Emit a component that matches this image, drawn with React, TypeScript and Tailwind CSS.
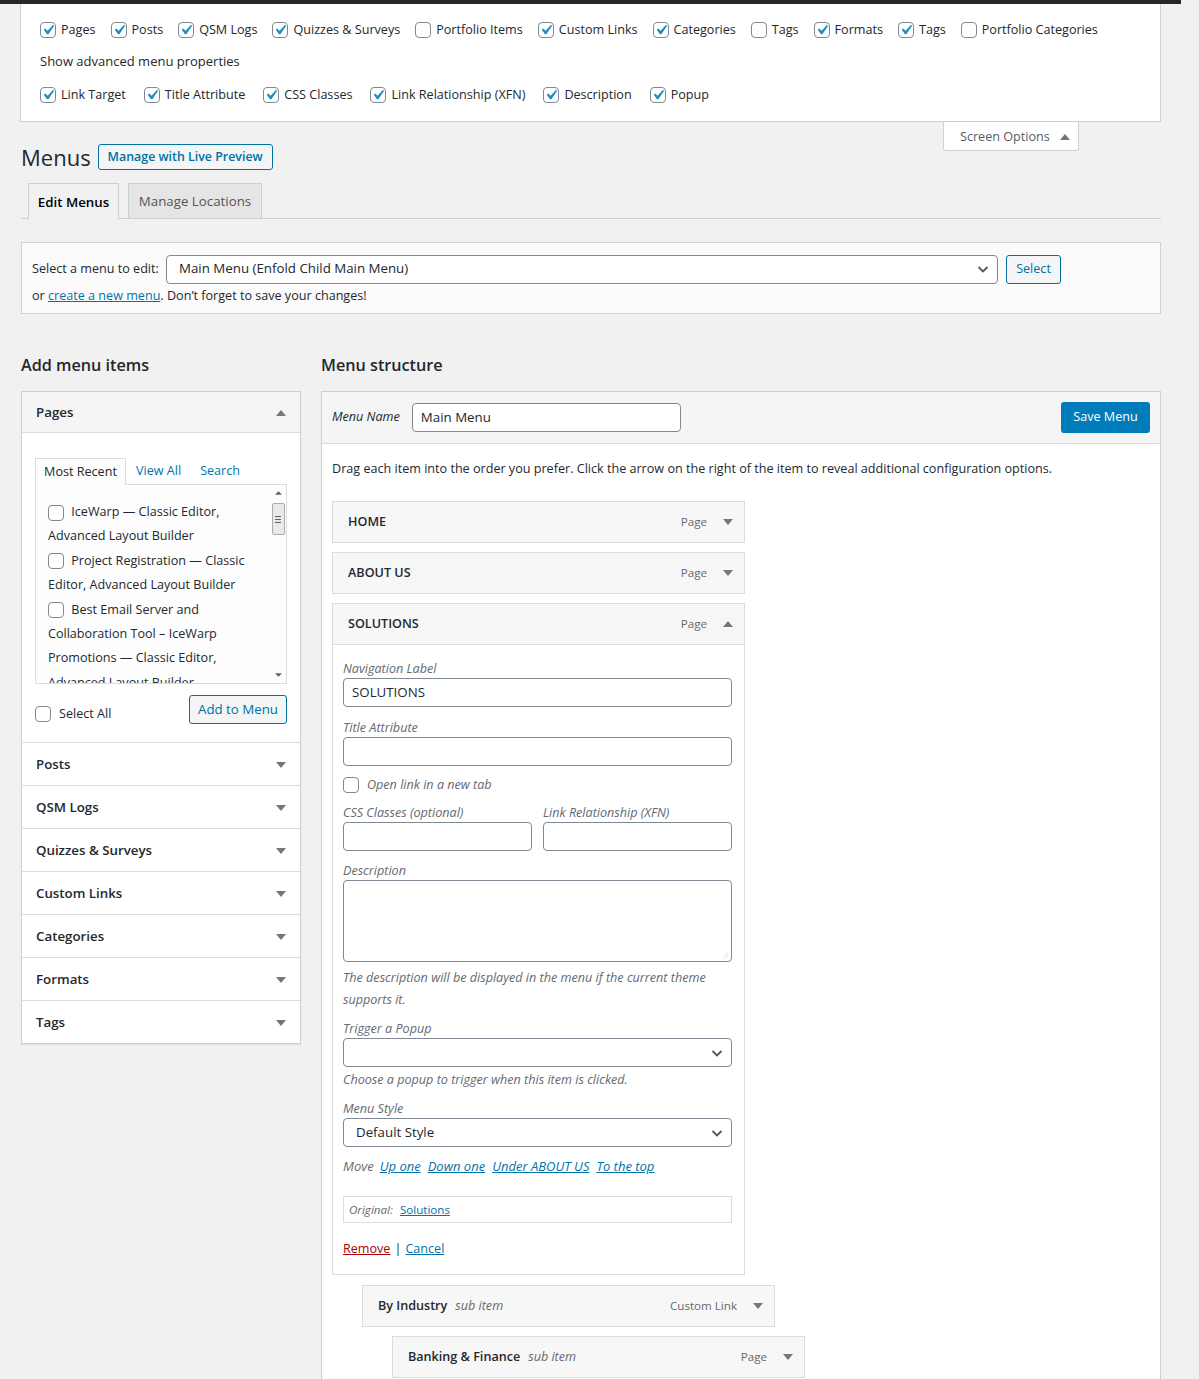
import React from "react";

const font = { fontFamily: '"Open Sans", "Noto Sans", Arial, sans-serif' };

function Check({ on = false }: { on?: boolean }) {
  return (
    <span className="relative inline-block h-4 w-4 shrink-0 rounded-[4px] border border-[#7e8993] bg-white align-middle">
      {on && (
        <svg viewBox="0 0 20 20" className="absolute -left-[3px] -top-[3px] h-5 w-5">
          <path d="M14.83 4.89l1.34.94-5.81 8.38H9.02L5.78 9.67l1.34-1.25 2.57 2.4z" fill="#1e8cbe" />
        </svg>
      )}
    </span>
  );
}

function Arrow({ up = false }: { up?: boolean }) {
  return (
    <svg viewBox="0 0 10 6" className="h-[6px] w-[10px]">
      {up ? <path d="M0 6 5 0 10 6z" fill="#72777c" /> : <path d="M0 0 5 6 10 0z" fill="#72777c" />}
    </svg>
  );
}

function Chevron() {
  return (
    <svg viewBox="0 0 16 16" className="h-4 w-4">
      <path d="M3.5 6 8 10.5 12.5 6" fill="none" stroke="#50575e" strokeWidth="1.8" />
    </svg>
  );
}

const typeRow1: [string, boolean][] = [
  ["Pages", true],
  ["Posts", true],
  ["QSM Logs", true],
  ["Quizzes & Surveys", true],
  ["Portfolio Items", false],
  ["Custom Links", true],
  ["Categories", true],
  ["Tags", false],
  ["Formats", true],
  ["Tags", true],
  ["Portfolio Categories", false],
];

const typeRow2 = ["Link Target", "Title Attribute", "CSS Classes", "Link Relationship (XFN)", "Description", "Popup"];

const sections = ["Posts", "QSM Logs", "Quizzes & Surveys", "Custom Links", "Categories", "Formats", "Tags"];

function ScreenOptions() {
  return (
    <div className="relative ml-[20px] w-[1141px]">
      <div className="h-[118px] border-x border-b border-[#ccd0d4] bg-white pl-[19px] pt-[16px] text-[12.6px] text-[#23282d]">
        <div className="flex h-5 items-center gap-x-[15px]">
          {typeRow1.map(([label, on], i) => (
            <label key={i} className="flex items-center gap-[5px]">
              <Check on={on} />
              <span>{label}</span>
            </label>
          ))}
        </div>
        <div className="mt-[12px] flex h-5 items-center text-[13px]">Show advanced menu properties</div>
        <div className="mt-[13px] flex h-5 items-center gap-x-[18px]">
          {typeRow2.map((label) => (
            <label key={label} className="flex items-center gap-[5px]">
              <Check on />
              <span>{label}</span>
            </label>
          ))}
        </div>
      </div>
      <div className="absolute right-[82px] top-full flex h-[29px] w-[136px] items-center gap-[10px] rounded-b-[3px] border-x border-b border-[#ccd0d4] bg-white pl-[16px] pt-[2px] text-[12.6px] text-[#555d66]">
        Screen Options
        <Arrow up />
      </div>
    </div>
  );
}

function Input({ value = "", className = "" }: { value?: string; className?: string }) {
  return (
    <div className={`flex h-[29px] items-center rounded-[4px] border border-[#7e8993] bg-white px-[8px] text-[13.3px] text-[#23282d] ${className}`}>
      {value}
    </div>
  );
}

function SelectBox({ value = "" }: { value?: string }) {
  return (
    <div className="flex h-[29px] items-center justify-between rounded-[4px] border border-[#7e8993] bg-white pl-[12px] pr-[6px] text-[13.3px] text-[#23282d]">
      <span>{value}</span>
      <Chevron />
    </div>
  );
}

function Label({ children }: { children: React.ReactNode }) {
  return <div className="flex h-[18px] items-center text-[12.6px] italic text-[#646970]">{children}</div>;
}

function ItemBar({ title, type, sub = false, up = false }: { title: string; type: string; sub?: boolean; up?: boolean }) {
  return (
    <div className="flex h-[42px] items-center justify-between border border-[#dcdcde] bg-[#f7f7f7] pl-[15px] pr-[11px]">
      <div className="flex items-center gap-[8px]">
        <span className="text-[12.6px] font-semibold text-[#23282d]">{title}</span>
        {sub && <span className="text-[12.6px] italic text-[#646970]">sub item</span>}
      </div>
      <div className="flex items-center gap-[16px]">
        <span className="text-[11.6px] text-[#646970]">{type}</span>
        <Arrow up={up} />
      </div>
    </div>
  );
}

function LeftColumn() {
  return (
    <div className="w-[280px] shrink-0">
      <h2 className="flex h-[24px] items-center text-[16.2px] font-semibold text-[#23282d]">Add menu items</h2>
      <div className="mt-[14px] border border-[#ccd0d4] bg-white shadow-[0_1px_1px_rgba(0,0,0,0.06)]">
        <div className="flex h-[41px] items-center justify-between border-b border-[#dcdcde] bg-[#f5f5f5] pl-[14px] pr-[14px] pt-[1px]">
          <span className="text-[13.3px] font-semibold text-[#23282d]">Pages</span>
          <Arrow up />
        </div>
        <div className="px-[13px] pb-[18px] pt-[25px]">
          <div className="flex h-[26px] items-end text-[12.6px]">
            <div className="-mb-px flex h-[27px] w-[91px] items-center justify-center border-x border-t border-[#dcdcde] bg-[#fdfdfd] text-[#23282d]">
              Most Recent
            </div>
            <span className="flex h-[26px] items-center pl-[10px] text-[#0073aa]">View All</span>
            <span className="flex h-[26px] items-center pl-[19px] text-[#0073aa]">Search</span>
          </div>
          <div className="flex h-[200px] overflow-hidden border border-[#dcdcde] bg-[#fdfdfd]">
            <div className="flex-1 pl-[12px] pr-[10px] pt-[15px] text-[12.6px] leading-[24.4px] text-[#23282d]">
              <p>
                <Check /> <span className="ml-[4px]">IceWarp — Classic Editor, Advanced Layout Builder</span>
              </p>
              <p>
                <Check /> <span className="ml-[4px]">Project Registration — Classic Editor, Advanced Layout Builder</span>
              </p>
              <p>
                <Check />{" "}
                <span className="ml-[4px]">Best Email Server and Collaboration Tool – IceWarp Promotions — Classic Editor, Advanced Layout Builder</span>
              </p>
            </div>
            <div className="flex w-[16px] flex-col items-center bg-[#fdfdfd]">
              <div className="flex h-[16px] w-full items-center justify-center">
                <svg viewBox="0 0 8 4" className="h-[4px] w-[7px]">
                  <path d="M0 4 4 0 8 4z" fill="#606060" />
                </svg>
              </div>
              <div className="mt-[2px] flex h-[32px] w-[13px] items-center justify-center rounded-[2px] border border-[#acacac] bg-[#e9e9e9]">
                <div className="flex flex-col gap-[2px]">
                  <div className="h-px w-[6px] bg-[#606060]" />
                  <div className="h-px w-[6px] bg-[#606060]" />
                  <div className="h-px w-[6px] bg-[#606060]" />
                </div>
              </div>
              <div className="flex-1" />
              <div className="flex h-[16px] w-full items-center justify-center">
                <svg viewBox="0 0 8 4" className="h-[4px] w-[7px]">
                  <path d="M0 0 4 4 8 0z" fill="#606060" />
                </svg>
              </div>
            </div>
          </div>
          <div className="mt-[11px] flex items-start justify-between">
            <label className="mt-[10px] flex items-center gap-[8px] text-[12.6px] text-[#23282d]">
              <Check />
              Select All
            </label>
            <div className="flex h-[29px] w-[98px] items-center justify-center rounded-[3px] border border-[#0071a1] bg-[#f3f5f6] text-[13.3px] text-[#0071a1]">
              Add to Menu
            </div>
          </div>
        </div>
        {sections.map((s) => (
          <div key={s} className="flex h-[43px] items-center justify-between border-t border-[#dcdcde] pl-[14px] pr-[14px] pt-[1px]">
            <span className="text-[13.3px] font-semibold text-[#23282d]">{s}</span>
            <Arrow />
          </div>
        ))}
      </div>
    </div>
  );
}

function RightColumn() {
  return (
    <div className="w-[840px] shrink-0">
      <h2 className="flex h-[24px] items-center text-[16.2px] font-semibold text-[#23282d]">Menu structure</h2>
      <div className="mt-[14px] border border-[#ccd0d4] bg-white">
        <div className="flex h-[52px] items-center justify-between border-b border-[#dcdcde] bg-[#f5f5f5] pl-[10px] pr-[10px]">
          <div className="flex items-center gap-[12px]">
            <span className="text-[12.6px] italic text-[#23282d]">Menu Name</span>
            <Input value="Main Menu" className="w-[269px]" />
          </div>
          <div className="flex h-[31px] w-[89px] items-center justify-center rounded-[3px] bg-[#007cba] text-[12.6px] text-white">
            Save Menu
          </div>
        </div>
        <div className="px-[10px] pb-[40px]">
          <p className="mt-[15px] h-[20px] text-[12.6px] leading-[20px] text-[#23282d]">
            Drag each item into the order you prefer. Click the arrow on the right of the item to reveal additional configuration options.
          </p>
          <div className="mt-[22px] w-[413px]">
            <ItemBar title="HOME" type="Page" />
            <div className="mt-[9px]">
              <ItemBar title="ABOUT US" type="Page" />
            </div>
            <div className="mt-[9px]">
              <ItemBar title="SOLUTIONS" type="Page" up />
              <div className="border-x border-b border-[#dcdcde] bg-white pb-[15px] pl-[10px] pr-[12px] pt-[15px]">
                <Label>Navigation Label</Label>
                <Input value="SOLUTIONS" />
                <div className="mt-[12px]">
                  <Label>Title Attribute</Label>
                  <Input />
                </div>
                <div className="mt-[10px] flex h-[18px] items-center gap-[8px] text-[12.6px] italic text-[#646970]">
                  <Check />
                  Open link in a new tab
                </div>
                <div className="mt-[10px] grid grid-cols-2 gap-[11px]">
                  <div>
                    <Label>CSS Classes (optional)</Label>
                    <Input />
                  </div>
                  <div>
                    <Label>Link Relationship (XFN)</Label>
                    <Input />
                  </div>
                </div>
                <div className="mt-[11px]">
                  <Label>Description</Label>
                  <div className="relative h-[82px] rounded-[4px] border border-[#7e8993] bg-white">
                    <svg viewBox="0 0 8 8" className="absolute bottom-[2px] right-[2px] h-[7px] w-[7px]">
                      <path d="M7 1 1 7M7 4 4 7" stroke="#b0b0b0" strokeWidth="1" strokeDasharray="1 1" />
                    </svg>
                  </div>
                </div>
                <p className="mt-[5px] text-[12.6px] italic leading-[22px] text-[#646970]">
                  The description will be displayed in the menu if the current theme supports it.
                </p>
                <div className="mt-[9px]">
                  <Label>Trigger a Popup</Label>
                  <SelectBox />
                </div>
                <p className="mt-[4px] text-[12.6px] italic leading-[18px] text-[#646970]">
                  Choose a popup to trigger when this item is clicked.
                </p>
                <div className="mt-[11px]">
                  <Label>Menu Style</Label>
                  <SelectBox value="Default Style" />
                </div>
                <div className="mt-[10px] flex h-[20px] items-center gap-[7px] text-[13px] italic text-[#646970]">
                  <span className="mr-[-1px]">Move</span>
                  <span className="text-[#0073aa] underline">Up one</span>
                  <span className="text-[#0073aa] underline">Down one</span>
                  <span className="text-[#0073aa] underline">Under ABOUT US</span>
                  <span className="text-[#0073aa] underline">To the top</span>
                </div>
                <div className="mt-[19px] flex h-[27px] items-center gap-[7px] border border-[#dcdcde] pl-[5px] text-[11.6px]">
                  <span className="italic text-[#646970]">Original:</span>
                  <span className="text-[#0073aa] underline">Solutions</span>
                </div>
                <div className="mt-[16px] flex h-[20px] items-center gap-[4px] text-[12.6px]">
                  <span className="text-[#a00] underline">Remove</span>
                  <span className="text-[#23282d]">|</span>
                  <span className="text-[#0073aa] underline">Cancel</span>
                </div>
              </div>
            </div>
          </div>
          <div className="ml-[30px] mt-[10px] w-[413px]">
            <ItemBar title="By Industry" type="Custom Link" sub />
          </div>
          <div className="ml-[60px] mt-[9px] w-[413px]">
            <ItemBar title="Banking & Finance" type="Page" sub />
          </div>
          <div className="ml-[60px] mt-[9px] w-[413px]">
            <ItemBar title="Insurance" type="Page" sub />
          </div>
        </div>
      </div>
    </div>
  );
}

export default function App() {
  return (
    <div className="min-h-screen bg-[#f1f1f1] pb-[40px]" style={font}>
      <div className="h-[4px] w-[1181px] bg-[#23282d]" />
      <ScreenOptions />
      <div className="pl-[21px]">
        <div className="mt-[22px] flex h-[26px] items-center gap-[7px]">
          <h1 className="text-[22px] font-normal text-[#23282d]">Menus</h1>
          <div className="flex h-[26px] items-center rounded-[3px] border border-[#0071a1] bg-[#f3f5f6] px-[9px] text-[12.4px] font-semibold text-[#0071a1]">
            Manage with Live Preview
          </div>
        </div>
        <div className="mt-[13px] flex w-[1140px] items-end gap-[9px] border-b border-[#ccd0d4] pl-[7px]">
          <div className="-mb-px flex h-[36px] w-[91px] items-center justify-center border-x border-t border-[#ccd0d4] bg-[#f1f1f1] pt-[2px] text-[13.3px] font-semibold text-black">
            Edit Menus
          </div>
          <div className="flex h-[35px] w-[134px] items-center justify-center border-x border-t border-[#ccd0d4] bg-[#e5e5e5] pt-[2px] text-[13.3px] font-medium text-[#555]">
            Manage Locations
          </div>
        </div>
        <div className="mt-[23px] w-[1140px] border border-[#ccd0d4] bg-[#fbfbfb] pb-[7px] pl-[10px] pt-[12px]">
          <div className="flex h-[28px] items-center">
            <span className="w-[134px] text-[12.6px] text-[#23282d]">Select a menu to edit:</span>
            <div className="w-[832px]">
              <SelectBox value="Main Menu (Enfold Child Main Menu)" />
            </div>
            <div className="ml-[8px] flex h-[29px] w-[55px] items-center justify-center rounded-[3px] border border-[#0071a1] bg-[#f3f5f6] text-[12.6px] text-[#0071a1]">
              Select
            </div>
          </div>
          <p className="mt-[3px] h-[20px] text-[12.6px] leading-[20px] text-[#23282d]">
            or <span className="text-[#0073aa] underline">create a new menu</span>. Don’t forget to save your changes!
          </p>
        </div>
        <div className="mt-[39px] flex gap-[20px]">
          <LeftColumn />
          <RightColumn />
        </div>
      </div>
    </div>
  );
}
